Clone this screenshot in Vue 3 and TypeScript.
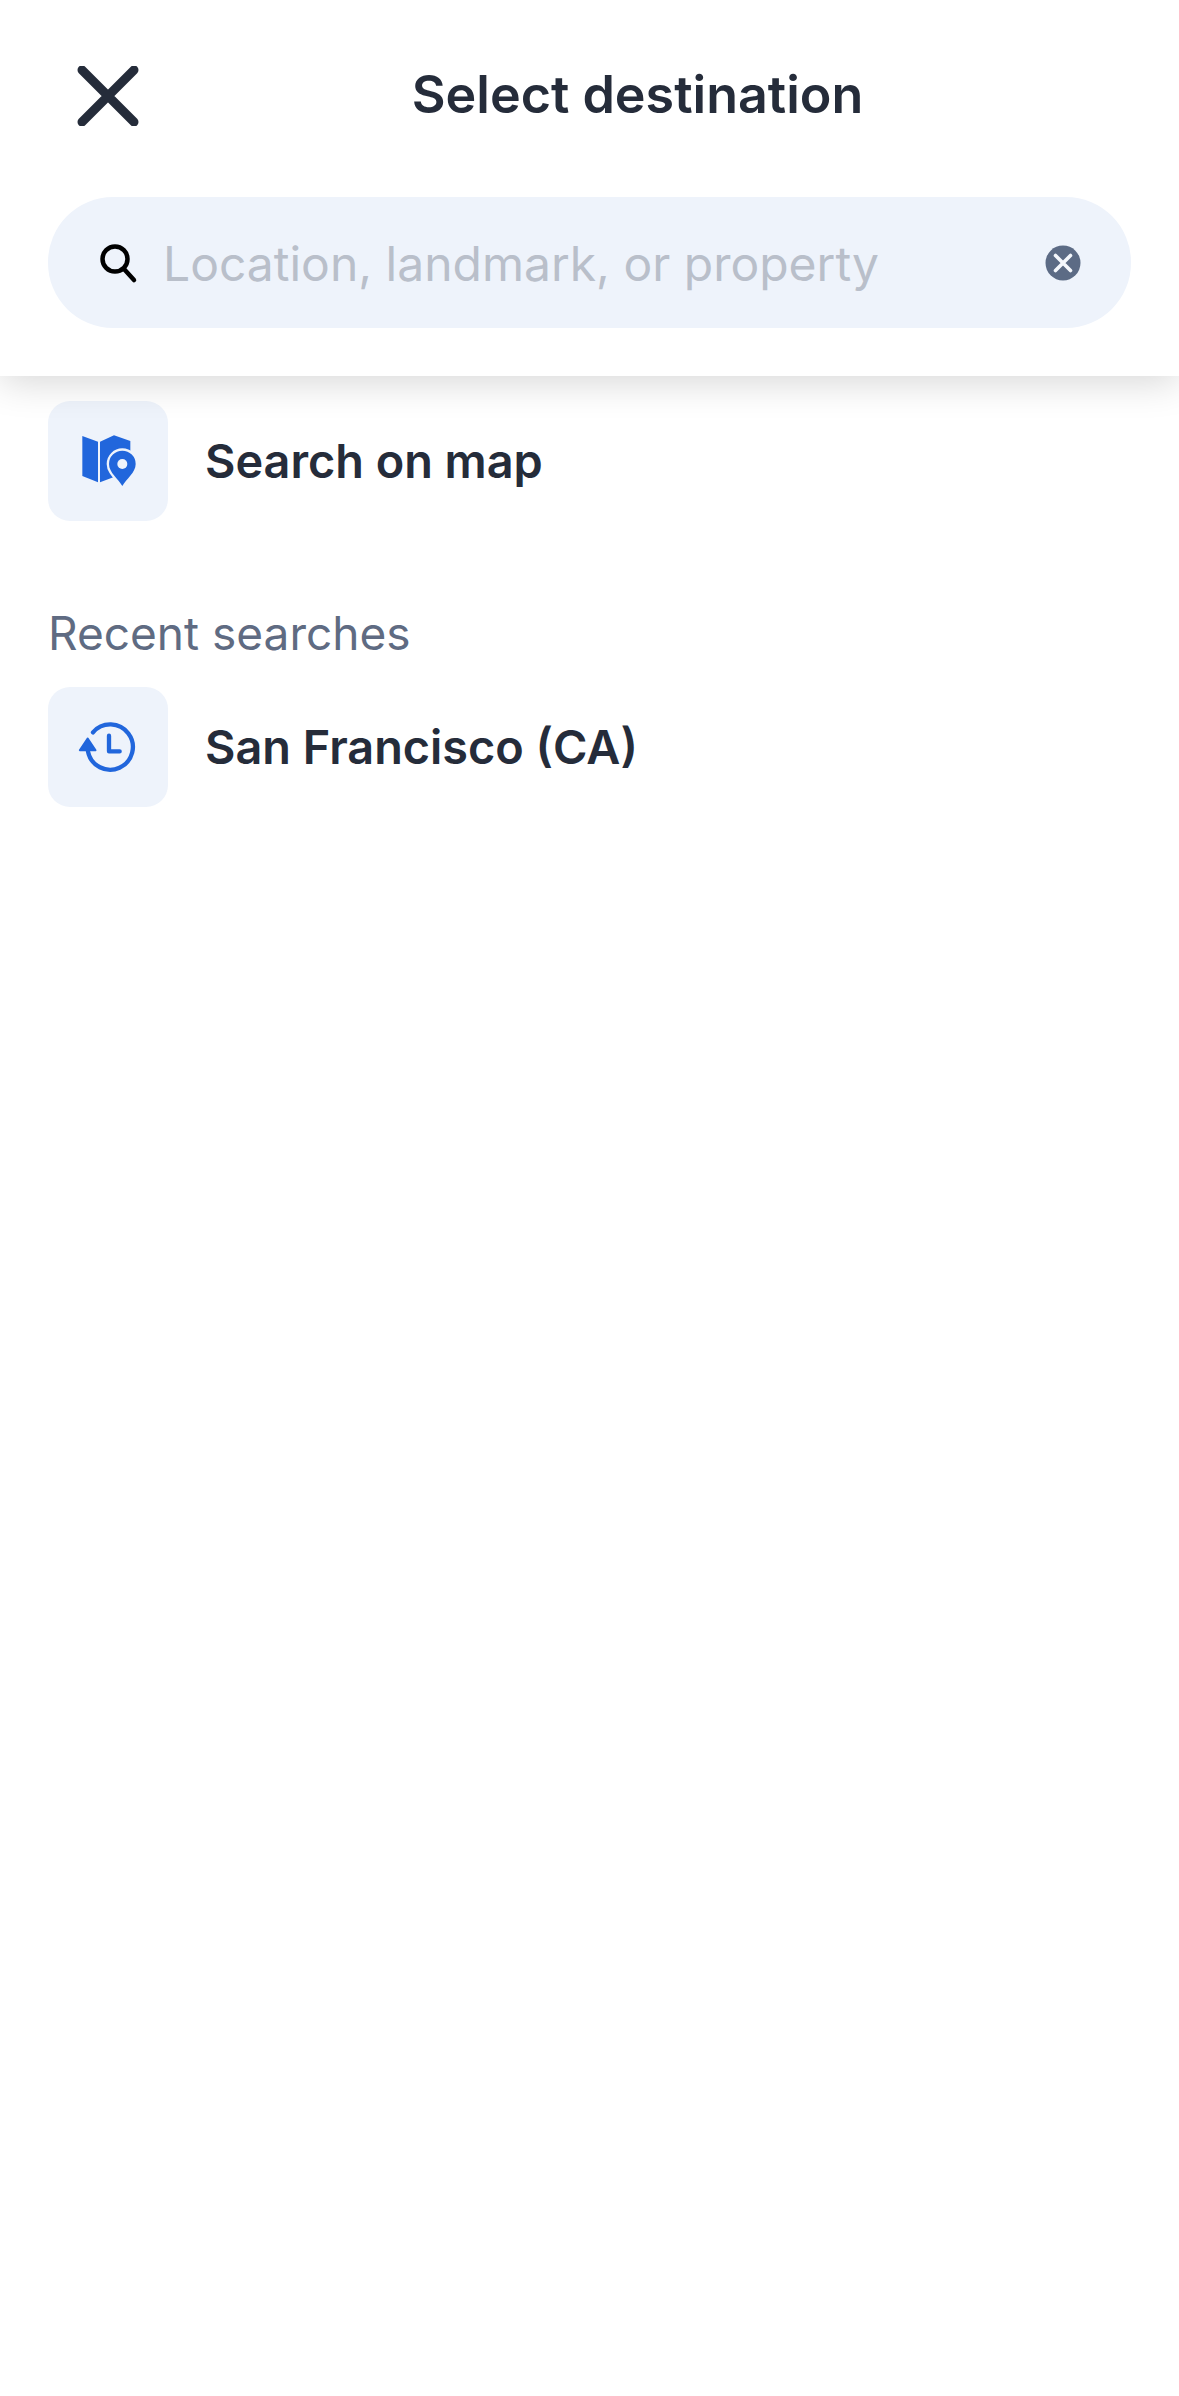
<script setup lang="ts">
interface Row { label: string; icon: 'map' | 'history' }
const mapRow: Row = { label: 'Search on map', icon: 'map' }
const recentRow: Row = { label: 'San Francisco (CA)', icon: 'history' }
</script>

<template>
  <div class="page">
    <header class="top">
      <div class="nav">
        <button class="close" aria-label="Close">
          <svg width="64" height="60" viewBox="0 0 64 60"><path d="M6 4 58 56M58 4 6 56" stroke="#252c3a" stroke-width="9" stroke-linecap="round" fill="none"/></svg>
        </button>
        <h1 class="title">Select destination</h1>
      </div>
      <div class="search">
        <svg class="glass" width="40" height="44" viewBox="0 0 40 44"><circle cx="17" cy="17" r="12.5" stroke="#000" stroke-width="4.5" fill="none"/><path d="M26 27 36 38" stroke="#000" stroke-width="4.5" stroke-linecap="round"/></svg>
        <span class="placeholder">Location, landmark, or property</span>
        <svg class="clear" width="36" height="36" viewBox="0 0 36 36"><circle cx="18" cy="18" r="17.5" fill="#5c6b85"/><path d="M10.5 10.5 25.5 25.5M25.5 10.5 10.5 25.5" stroke="#f4f7fc" stroke-width="3.6" stroke-linecap="round"/></svg>
      </div>
    </header>
    <main class="content">
      <div class="row">
        <div class="tile">
          <svg width="120" height="120" viewBox="55 68 360 360">
            <path d="M158 173 205 190V312L158 293Z" fill="#2166dc"/>
            <path d="M211 190 253 171 302 188V280L253 296 211 312Z" fill="#2166dc"/>
            <path d="M278 323C266 302 238 283 238 257A40 40 0 0 1 318 257C318 283 290 302 278 323Z" fill="#2166dc" stroke="#eef3fb" stroke-width="14" paint-order="stroke"/>
            <circle cx="278" cy="257" r="15" fill="#eef3fb"/>
          </svg>
        </div>
        <span class="label">{{ mapRow.label }}</span>
      </div>
      <h2 class="section">Recent searches</h2>
      <div class="row">
        <div class="tile">
          <svg width="120" height="120" viewBox="55 50 360 360">
            <path d="M190 186A68 68 0 1 1 175 244" fill="none" stroke="#2166dc" stroke-width="13" stroke-linecap="round"/>
            <path d="M150 240 174 204 198 240Z" fill="#2166dc" stroke="#2166dc" stroke-width="5" stroke-linejoin="round"/>
            <path d="M238 196V243H270" fill="none" stroke="#2166dc" stroke-width="13" stroke-linecap="round" stroke-linejoin="round"/>
          </svg>
        </div>
        <span class="label">{{ recentRow.label }}</span>
      </div>
    </main>
  </div>
</template>

<style scoped>
.page {
  width: 1179px;
  height: 2396px;
  background: #fff;
  font-family: Inter, "Liberation Sans", sans-serif;
  overflow: hidden;
}
.top {
  position: relative;
  z-index: 1;
  box-sizing: border-box;
  height: 376px;
  padding: 63px 48px 0;
  background: #fff;
  box-shadow: 0 6px 36px rgba(0, 0, 0, 0.16);
}
.nav {
  display: grid;
  grid-template-columns: 120px 1fr 24px;
  align-items: center;
  height: 62px;
}
.close {
  padding: 0 0 0 28px;
  border: 0;
  background: none;
  display: flex;
  height: 62px;
  align-items: center;
}
.title {
  margin: 0 0 2px;
  text-align: center;
  font-size: 52px;
  font-weight: 600;
  color: #252c3a;
  white-space: nowrap;
}
.search {
  margin-top: 72px;
  height: 131px;
  border-radius: 65px;
  background: #eef3fb;
  display: flex;
  align-items: center;
  padding: 0 50px 0 50px;
}
.glass {
  flex: none;
  margin-top: 2px;
}
.placeholder {
  margin-left: 25px;
  margin-top: 2px;
  flex: 1;
  font-size: 48px;
  color: #b9bfca;
  white-space: nowrap;
}
.clear {
  flex: none;
}
.content {
  padding: 25px 48px 0;
}
.row {
  display: flex;
  align-items: center;
  gap: 37px;
}
.tile {
  width: 120px;
  height: 120px;
  border-radius: 22px;
  background: #eef3fb;
  flex: none;
}
.tile svg {
  display: block;
}
.label {
  margin-bottom: 1px;
  font-size: 46.8px;
  font-weight: 600;
  color: #252c3a;
  white-space: nowrap;
}
.section {
  margin: 84px 0 0;
  height: 82px;
  font-size: 46px;
  font-weight: 400;
  line-height: 56px;
  color: #5f6b82;
}
</style>
